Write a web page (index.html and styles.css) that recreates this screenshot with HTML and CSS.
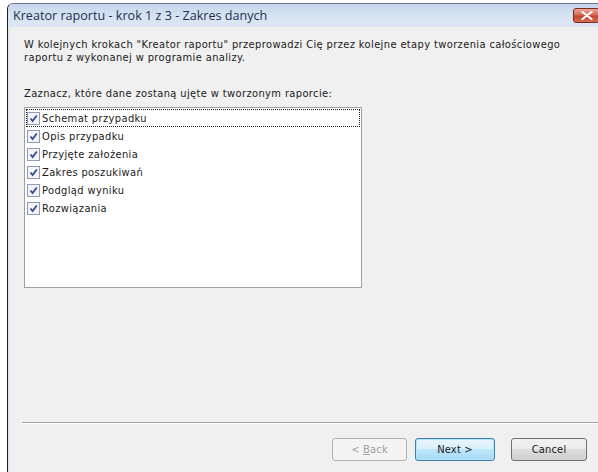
FILE: index.html
```html
<!DOCTYPE html>
<html lang="pl">
<head>
<meta charset="utf-8">
<title>Kreator raportu</title>
<link rel="stylesheet" href="styles.css">
</head>
<body>
<div class="window">
  <div class="titlebar">
    <span class="title">Kreator raportu - krok 1 z 3 - Zakres danych</span>
    <button class="close" aria-label="Zamknij">
      <svg width="12" height="9" viewBox="0 0 12 9"><path d="M1.5 1 L10.5 8 M10.5 1 L1.5 8" stroke="#fff" stroke-width="2.2" stroke-linecap="round"/></svg>
    </button>
  </div>
  <div class="client">
    <p class="intro">W kolejnych krokach "Kreator raportu" przeprowadzi Cię przez kolejne etapy tworzenia całościowego raportu z wykonanej w programie analizy.</p>
    <p class="label">Zaznacz, które dane zostaną ujęte w tworzonym raporcie:</p>
    <ul class="checklist">
      <li class="item focused"><span class="box"></span>Schemat przypadku</li>
      <li class="item"><span class="box"></span>Opis przypadku</li>
      <li class="item"><span class="box"></span>Przyjęte założenia</li>
      <li class="item"><span class="box"></span>Zakres poszukiwań</li>
      <li class="item"><span class="box"></span>Podgląd wyniku</li>
      <li class="item"><span class="box"></span>Rozwiązania</li>
    </ul>
    <div class="spacer"></div>
    <hr class="separator">
    <div class="buttons">
      <button class="btn" disabled>&lt; <u>B</u>ack</button>
      <button class="btn default">Next &gt;</button>
      <button class="btn cancel">Cancel</button>
    </div>
  </div>
</div>
</body>
</html>
```

FILE: styles.css
```css
html, body {
  margin: 0;
  padding: 0;
  background: #ffffff;
}

body {
  width: 598px;
  height: 472px;
  overflow: hidden;
  font-family: Tahoma, "DejaVu Sans Condensed", "Liberation Sans", sans-serif;
  font-size: 11px;
  letter-spacing: 0.38px;
  color: #1a1a1a;
}

.window {
  margin: 3px 0 0 7px;
  width: 600px;
  height: 469px;
  display: flex;
  flex-direction: column;
  border-left: 1px solid #1d1d1d;
  border-top: 1px solid #6d7c8e;
  border-top-left-radius: 6px;
  background: #dfe8f2;
  overflow: hidden;
}

.titlebar {
  height: 23px;
  flex: none;
  display: flex;
  align-items: center;
  padding-left: 5px;
  background: linear-gradient(#c6d7ec, #d8e4f2 60%, #dde7f3);
}

.title {
  font-family: "Open Sans", "Noto Sans", sans-serif;
  font-size: 12.6px;
  letter-spacing: 0;
  color: #1e2f52;
  flex: 1;
  white-space: nowrap;
}

.close {
  width: 27px;
  height: 15px;
  margin-right: 8px;
  padding: 0;
  border: 1px solid #7a2a20;
  border-radius: 3px;
  background: linear-gradient(#e9a99a, #d56b55 45%, #c4432c 55%, #d5705a);
  display: flex;
  align-items: center;
  justify-content: center;
}

.client {
  flex: 1;
  display: flex;
  flex-direction: column;
  margin-left: 2px;
  background: #f0f0f0;
  padding: 11px 0 0 14px;
}

.intro {
  margin: 0;
  width: 548px;
  line-height: 13px;
}

.label {
  margin: 23px 0 0;
  line-height: 13px;
}

.checklist {
  list-style: none;
  margin: 7px 0 0;
  padding: 1px;
  box-sizing: border-box;
  width: 338px;
  height: 181px;
  background: #ffffff;
  border: 1px solid #a0a0a0;
}

.item {
  height: 18px;
  display: flex;
  align-items: center;
  gap: 2px;
  border: 1px dotted transparent;
  box-sizing: border-box;
}

.item.focused {
  border-color: #222;
}

.box {
  width: 11px;
  height: 11px;
  border: 1px solid #8e9bb0;
  background: #f2f4f8 url("data:image/svg+xml,%3Csvg xmlns='http://www.w3.org/2000/svg' width='11' height='11'%3E%3Cpath d='M2.5 5.5 L4.6 8 L8.8 2.5' stroke='%23304a96' stroke-width='1.8' fill='none'/%3E%3C/svg%3E") no-repeat center;
  flex: none;
}

.spacer {
  flex: 1;
}

.separator {
  margin: 0 0 14px -2px;
  border: 0;
  height: 2px;
  background: linear-gradient(#a0a0a0 50%, #ffffff 50%);
}

.buttons {
  display: flex;
  gap: 8px;
  padding-left: 308px;
  margin-bottom: 12px;
}

.btn {
  font: inherit;
  letter-spacing: 0.2px;
  width: 75px;
  height: 23px;
  padding: 0;
  border: 1px solid #707070;
  border-radius: 3px;
  background: linear-gradient(#f2f2f2, #ebebeb 50%, #dddddd 50%, #cfcfcf);
  color: #1a1a1a;
}

.btn[disabled] {
  color: #a0a0a0;
  border-color: #adb2b5;
  background: #f4f4f4;
}

.btn.default {
  width: 80px;
  border-color: #3c7fb1;
  background: linear-gradient(#eaf6fd, #d9f0fc 50%, #bee6fd 50%, #a7d9f5);
  box-shadow: inset 0 0 0 1px #b4e4f9;
}

.btn.cancel {
  margin-left: 8px;
  width: 76px;
}
```
